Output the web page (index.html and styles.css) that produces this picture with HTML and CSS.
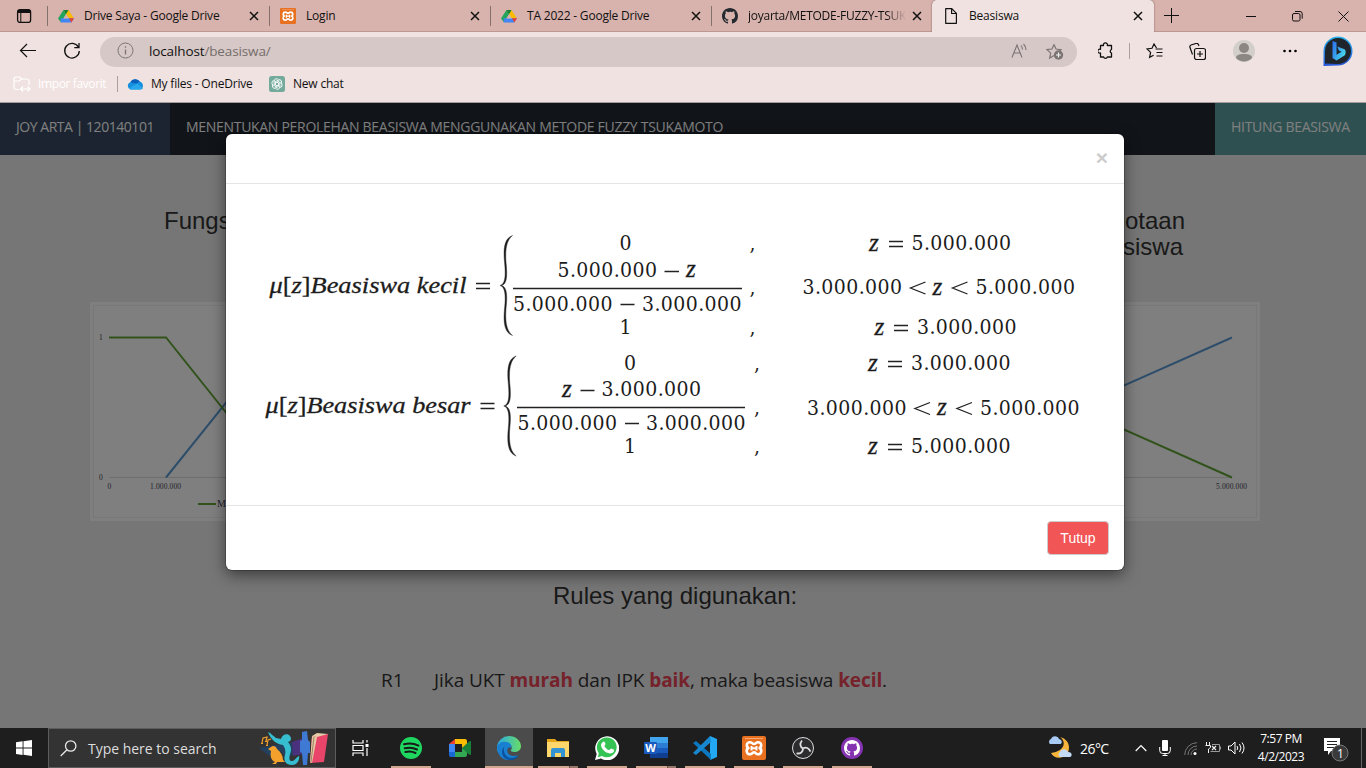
FILE: index.html
```html
<!DOCTYPE html>
<html lang="id">
<head>
<meta charset="utf-8">
<title>Beasiswa</title>
<link rel="stylesheet" href="styles.css">
</head>
<body>
<svg class="defs" width="0" height="0" aria-hidden="true">
  <symbol id="drive" viewBox="0 0 16 16">
    <path fill="#22a45d" d="M5.5 2h5L5 11.300 2.700 14 0 10.500z"/><path fill="#fbbc04" d="M5.500 2h5L16 10.500h-5z"/><path fill="#4285f4" d="M2.700 10.300H16L13.300 14.600H2.700z"/><path fill="#ea4335" d="M11 10.300h5l-2.700 4.300z"/><path fill="#188038" d="M5.500 2h5L8 6.200z"/><path fill="#d8b2ac" d="M8 6.200 10.600 10.400H5.400z"/>
  </symbol>
  <symbol id="xampp" viewBox="0 0 24 24">
    <rect width="24" height="24" rx="2" fill="#e8701f"/><path d="M3 2.500h18" stroke="#f3a878"/>
    <g fill="none" stroke="#fff" stroke-width="2.600" stroke-linejoin="round"><path d="M8 6.200c2 0 2.500 1.800 4 1.800s2-1.800 4-1.800c3.800 0 4 4.600 1.600 5.800 2.800 1.500 2 6.300-1.600 6.300-2 0-2.500-2-4-2s-2 2-4 2c-3.600 0-4.400-4.800-1.600-6.300C4 10.800 4.200 6.200 8 6.200z"/><path d="M9 12.200h6M9.500 10v4.500M14.500 10v4.500" stroke-width="2"/></g>
  </symbol>
  <symbol id="github" viewBox="0 0 16 16">
    <path d="M8 0C3.580 0 0 3.580 0 8c0 3.540 2.290 6.530 5.470 7.590.4.070.55-.17.55-.38v-1.490c-2.010.37-2.530-.49-2.690-.94-.09-.23-.48-.94-.82-1.130-.28-.15-.68-.52-.01-.53.63-.01 1.080.58 1.230.82.72 1.210 1.870.87 2.330.66.07-.52.28-.87.51-1.070-1.780-.2-3.640-.89-3.640-3.950 0-.87.31-1.590.82-2.150-.08-.2-.36-1.020.08-2.120 0 0 .67-.21 2.200.82A7.600 7.600 0 0 1 8 3.860c.68 0 1.360.09 2 .27 1.530-1.040 2.200-.82 2.200-.82.44 1.100.16 1.920.08 2.120.51.56.82 1.270.82 2.150 0 3.070-1.870 3.750-3.650 3.950.29.25.54.73.54 1.480v2.200c0 .21.15.46.55.38A8 8 0 0 0 16 8c0-4.420-3.580-8-8-8z"/>
  </symbol>
  <symbol id="x" viewBox="0 0 10 10"><path d="M1 1l8 8M9 1L1 9" stroke="#111" stroke-width="1.500"/></symbol>
</svg>

<header class="browser">
  <div class="tabs">
    <div class="tab-actions"><svg width="16" height="16" viewBox="0 0 16 16"><rect x="1.600" y="1.600" width="13" height="12.800" rx="2.500" fill="none" stroke="#111" stroke-width="1.300"/><path d="M1.500 5V3.500a2 2 0 0 1 2-2h9a2 2 0 0 1 2 2V5z" fill="#111"/><path d="M4.800 5v9" stroke="#111" stroke-width="1"/></svg></div>
    <div class="tab first"><svg width="16" height="16"><use href="#drive"/></svg><span>Drive Saya - Google Drive</span><svg class="close" width="10" height="10"><use href="#x"/></svg></div>
    <div class="tab"><svg width="16" height="16"><use href="#xampp"/></svg><span>Login</span><svg class="close" width="10" height="10"><use href="#x"/></svg></div>
    <div class="tab"><svg width="16" height="16"><use href="#drive"/></svg><span>TA 2022 - Google Drive</span><svg class="close" width="10" height="10"><use href="#x"/></svg></div>
    <div class="tab"><svg width="16" height="16" fill="#24292f"><use href="#github"/></svg><span class="faded">joyarta/METODE-FUZZY-TSUK</span><svg class="close" width="10" height="10"><use href="#x"/></svg></div>
    <div class="tab active"><svg width="16" height="16" viewBox="0 0 16 16"><path d="M2.700.7h6.100l4.600 4.600V15.300H2.700zM8.600.7v4.800h4.800" fill="none" stroke="#111" stroke-width="1.200" stroke-linejoin="round"/></svg><span>Beasiswa</span><svg class="close" width="10" height="10"><use href="#x"/></svg></div>
    <div class="new-tab"><svg width="15" height="15"><path d="M7.500 0v15M0 7.500h15" stroke="#111"/></svg></div>
    <div class="win"><svg width="10" height="10"><path d="M0 5.500h10" stroke="#111"/></svg></div>
    <div class="win"><svg width="11" height="11" viewBox="0 0 11 11" fill="none" stroke="#111"><rect x=".5" y="2.500" width="7.500" height="7.500" rx="1.500"/><path d="M3 .5h5a2.200 2.200 0 0 1 2.200 2.200v5"/></svg></div>
    <div class="win"><svg width="11" height="11"><path d="M.5.5l10 10M10.500.5l-10 10" stroke="#111"/></svg></div>
  </div>

  <div class="toolbar">
    <svg class="back" width="18" height="16" fill="none" stroke="#111" stroke-width="1.200"><path d="M17 7.500H1.500M8 1L1.500 7.500 8 14"/></svg>
    <svg class="reload" width="18" height="18" fill="none" stroke="#111" stroke-width="1.300"><path d="M15.300 5A7.300 7.300 0 1 0 16.300 9M16 1v4.700h-4.700"/></svg>
    <div class="omnibox">
      <svg width="17" height="17" fill="none" stroke="#7c7474"><circle cx="8.500" cy="8.500" r="7.500"/><path d="M8.500 7.500v5M8.500 4.300v1.500" stroke-width="1.300"/></svg>
      <span class="url">localhost<i>/beasiswa/</i></span>
      <svg class="aloud" width="18" height="16" fill="none" stroke="#7c7474" stroke-width="1.100"><path d="M1 14.500L6 2l5 12.500M2.800 10h6.400M10 2.500a6 6 0 0 1 1.500 4M12.500 1a8 8 0 0 1 2.500 6"/></svg>
      <svg class="fav" width="19" height="18" fill="none" stroke="#7c7474" stroke-width="1.200"><path d="M8 1.500l2 4.500 5 .6-3.600 3.400M8 1.500L6 6l-5 .6 3.700 3.500-1 5L8 12.600"/><circle cx="12.500" cy="12" r="4.700" fill="#7c7474" stroke="none"/><path d="M12.500 9.500v5M10 12h5" stroke="#eee"/></svg>
    </div>
    <div class="tools">
      <svg width="16" height="18" viewBox="0 0 16 18" fill="none" stroke="#111" stroke-width="1.300"><path d="M2.500 3.500h3a2 2 0 1 1 3.800 0h4.200v4a1.900 1.900 0 0 0 0 3.600v3.900H9.400a2 2 0 0 1-3.800 0H2.500V11a2 2 0 1 1 0-3.700z" stroke-linejoin="round"/></svg>
      <b></b>
      <svg width="17" height="16" fill="none" stroke="#111" stroke-width="1.200"><path d="M10.500 5L8 1 6 5.300l-5 .6 3.600 3.500-1 5 4-2.200M9.500 6h7M10.500 9.500h6M10.500 13h6"/></svg>
      <svg class="collect" width="17" height="17" fill="none" stroke="#111" stroke-width="1.200"><rect x="5.500" y="5.500" width="11" height="11" rx="2"/><path d="M11 8v6M8 11h6M3.500 11.500L.9 4.300A2 2 0 0 1 2 2l5-1.500a2 2 0 0 1 2.400 1L10 3"/></svg>
      <svg width="22" height="22"><circle cx="11" cy="11" r="11" fill="#d2cfcb"/><circle cx="11" cy="8" r="5" fill="#8c8783"/><path d="M3 18c0-3 3-4 8-4s8 1 8 4a11 11 0 0 1-16 0z" fill="#8c8783"/></svg>
      <svg width="16" height="4"><circle cx="2.500" cy="2" r="1.300"/><circle cx="8" cy="2" r="1.300"/><circle cx="13.500" cy="2" r="1.300"/></svg>
      <svg width="32" height="32"><defs><linearGradient id="bg" x2="0" y2="1"><stop stop-color="#27b4ee"/><stop offset="1" stop-color="#2856d8"/></linearGradient><linearGradient id="bb" x2="1" y2=".6"><stop stop-color="#2b6cf0"/><stop offset="1" stop-color="#45d5e8"/></linearGradient></defs><path d="M1.500 31V16A14.500 14.500 0 1 1 16 30.500z" fill="url(#bg)"/><path d="M3 28.500V16A13 13 0 1 1 16 29z" fill="#20242b"/><path d="M10.500 6l4 1.500v12.300l5-3-2.600-1.200-1.600-4 7.200 2.600c1.600 1 1.500 5.200 0 6.200l-8 5-4-2.400z" fill="url(#bb)"/></svg>
    </div>
  </div>

  <div class="favorites">
    <svg width="18" height="16" fill="none" stroke="#fff" stroke-width="1.200"><path d="M6 13.500H3a2 2 0 0 1-2-2V3a2 2 0 0 1 2-2h3.500l2 2H14a2 2 0 0 1 2 2v4M1 5h5.500l2-2M8 13h9M10 10.500L7.500 13l2.500 2.500M14.500 10.500L17 13l-2.500 2.500"/></svg>
    <span class="import">Impor favorit</span><b></b>
    <svg width="17" height="12"><path d="M4 11.500a3.800 3.800 0 0 1-.7-7.300A5.600 5.600 0 0 1 13 3.800a4 4 0 0 1 0 7.700z" fill="#1490df"/><path d="M3.300 4.200A5.600 5.600 0 0 1 13 3.800c-2 .2-2 1-3.500 2z" fill="#0a5fb8"/><path d="M2 10.500l8-5 6 5a4 4 0 0 1-2.500 1H4a4 4 0 0 1-2-1z" fill="#28a8ea"/></svg>
    <span class="onedrive">My files - OneDrive</span>
    <svg width="16" height="16" viewBox="0 0 16 16"><rect width="16" height="16" rx="2.500" fill="#74aa9c"/><g fill="none" stroke="#fff" stroke-width=".9"><path id="petal" d="M8 9.800L5.200 8.200V5A2.300 2.300 0 0 1 9.500 3.900"/><use href="#petal" transform="rotate(60 8 8)"/><use href="#petal" transform="rotate(120 8 8)"/><use href="#petal" transform="rotate(180 8 8)"/><use href="#petal" transform="rotate(240 8 8)"/><use href="#petal" transform="rotate(300 8 8)"/></g></svg>
    <span>New chat</span>
  </div>
</header>

<main class="page">
  <nav class="nav">
    <a class="brand">JOY ARTA | 120140101</a>
    <a class="title">MENENTUKAN PEROLEHAN BEASISWA MENGGUNAKAN METODE FUZZY TSUKAMOTO</a>
    <a class="cta">HITUNG BEASISWA</a>
  </nav>
  <section class="charts">
    <div class="col left">
      <h3>Fungsi</h3>
      <svg class="chart" width="390" height="219" viewBox="90 302 390 219">
        <rect x="90" y="302" width="390" height="219" fill="#fff"/><rect x="93.500" y="305.500" width="383" height="212" fill="none" stroke="#f1f1f1"/>
        <path d="M109 477.500H450" stroke="#dcdcdc"/>
        <path d="M166 477.500L278 338" stroke="#5b9bd5" stroke-width="2"/>
        <path d="M109 337.500H166L278 477.500" stroke="#62a536" stroke-width="1.900" fill="none"/>
        <path d="M198 504H216" stroke="#62a536" stroke-width="2"/>
        <g class="ticks"><text x="99" y="340">1</text><text x="99" y="480">0</text><text x="107.500" y="489">0</text><text x="150" y="489" textLength="31">1.000.000</text><text class="legend" x="217" y="507">M</text></g>
      </svg>
    </div>
    <div class="col right">
      <h3>Keanggotaan<br><span>Beasiswa</span></h3>
      <svg class="chart" width="390" height="219" viewBox="870 302 390 219">
        <rect x="870" y="302" width="390" height="219" fill="#fff"/><rect x="873.500" y="305.500" width="383" height="212" fill="none" stroke="#f1f1f1"/>
        <path d="M900 477.500H1232" stroke="#dcdcdc"/>
        <path d="M917 477.500L1232 337.500" stroke="#5b9bd5" stroke-width="2"/>
        <path d="M917 337.500L1232 477.500" stroke="#62a536" stroke-width="2"/>
        <g class="ticks"><text x="1216" y="489" textLength="31">5.000.000</text></g>
      </svg>
    </div>
  </section>
  <section class="rules">
    <h3>Rules yang digunakan:</h3>
    <p><span class="no">R1</span><span class="rule">Jika UKT <strong>murah</strong> dan IPK <strong>baik</strong>, maka beasiswa <strong>kecil</strong>.</span></p>
  </section>

  <div class="backdrop">
    <div class="modal">
      <div class="modal-head"><button class="dismiss">×</button></div>
      <svg class="formula" width="898" height="321" viewBox="226 184 898 321">
        <g class="it">
          <text x="269.500" y="292.500" textLength="197" lengthAdjust="spacingAndGlyphs">μ<tspan class="up">[</tspan>z<tspan class="up">]</tspan>Beasiswa kecil</text>
          <text x="265.500" y="412.500" textLength="205" lengthAdjust="spacingAndGlyphs">μ<tspan class="up">[</tspan>z<tspan class="up">]</tspan>Beasiswa besar</text>
        </g>
        <g class="ops">
          <path d="M476 283.500h14M476 288.500h14M480.500 403.500h14M480.500 408.500h14"/>
          <path d="M889 241.500h14M889 246.500h14M894 325.500h14M894 330.500h14M888 361.500h14M888 366.500h14M888 444.500h14M888 449.500h14"/>
          <path d="M664.500 271.500h14.500M620.500 304.500h14M580.500 390.500h14M625 423.500h14"/>
          <path d="M925.500 282L910.500 288l15 6M967.500 282L952.500 288l15 6M930 402.500L915 408.500l15 6M972 402.500L957 408.500l15 6"/>
          <path d="M513 288.500h229M517 407.500h228"/>
        </g>
        <g class="brace">
          <path id="brace" d="M512.500 235.500C505 238 503 247 504.500 262C506 277 505 284 500 285.500C505 287 506 294 504.500 309C503 324 505 333 512.500 335.500C507 331 505 323 506 309C507.500 295 507 287 501.500 285.500C507 284 507.500 276 506 262C505 248 507 240 512.500 235.500z"/>
          <use href="#brace" x="3.700" y="120.500"/>
        </g>
        <g transform="translate(0 -1)">
          <text x="619.500" y="251">0</text><text x="557.500" y="278" textLength="99.500">5.000.000</text><text class="z" x="686" y="278">z</text>
          <text x="513" y="311.500" textLength="99.500">5.000.000</text><text x="642" y="311.500" textLength="99.500">3.000.000</text><text x="619.500" y="335">1</text>
          <text x="624" y="371">0</text><text class="z" x="562" y="397.500">z</text><text x="601.500" y="397" textLength="99.500">3.000.000</text>
          <text x="517.500" y="431" textLength="99.500">5.000.000</text><text x="646" y="431" textLength="99.500">3.000.000</text><text x="624" y="454">1</text>
          <text x="749.500" y="251">,</text><text x="749.500" y="295">,</text><text x="749.500" y="335">,</text>
          <text x="754" y="371">,</text><text x="754" y="415">,</text><text x="754" y="454">,</text>
          <text class="z" x="869" y="251.500">z</text><text x="911.500" y="251" textLength="99.500">5.000.000</text>
          <text x="802.500" y="295" textLength="99.500">3.000.000</text><text class="z" x="932.500" y="295.500">z</text><text x="975.500" y="295" textLength="99.500">5.000.000</text>
          <text class="z" x="874.500" y="335.500">z</text><text x="917" y="335" textLength="99.500">3.000.000</text>
          <text class="z" x="868" y="371.500">z</text><text x="911" y="371" textLength="99.500">3.000.000</text>
          <text x="807" y="415.500" textLength="99.500">3.000.000</text><text class="z" x="937" y="415.500">z</text><text x="980" y="415.500" textLength="99.500">5.000.000</text>
          <text class="z" x="868" y="454.500">z</text><text x="911" y="454" textLength="99.500">5.000.000</text>
        </g>
      </svg>
      <div class="modal-foot"><button class="tutup">Tutup</button></div>
    </div>
  </div>
</main>

<footer class="taskbar">
  <div class="start"><svg width="16" height="16" fill="#fff"><path d="M0 2.200L6.600 1.300V7.600H0zM7.500 1.200L16 0v7.600H7.500zM0 8.500h6.600v6.400L0 14zM7.500 8.500H16V16l-8.500-1.200z"/></svg></div>
  <div class="search">
    <svg width="17" height="17" fill="none" stroke="#e8e8e8" stroke-width="1.300"><circle cx="10.700" cy="6" r="5.200"/><path d="M7 9.700L.7 16"/></svg>
    <span>Type here to search</span>
    <svg class="art" width="71" height="36" viewBox="0 0 71 36">
      <path d="M0 18l9 7 5 2 8-6 5 8 9-6 7-12-10 1z" fill="#24405f"/><path d="M33 12l11-4v16l-10 2z" fill="#49317d"/>
      <path d="M12 17c2-2 5-1 6 2 4 3 6 7 6 11l2 2h-8l-1 2h-4l3-2c-4-2-5-6-4-11l-3-2z" fill="#f3a12c"/>
      <path d="M3 13l1-5 4-1-1 4M8 15l1-5 3-1M2 13.500h2M6 11.500h2M7 15.500h2" stroke="#f3a12c" fill="none" stroke-width="1.200"/>
      <path d="M9 2c3 1 5 4 8 6l5 1c1-5 7-6 9-3s1 5-2 6c3 4 4 7 2 12-1 4-1 7 2 7s3-3 7-5c1 4-2 9-7 9-6 0-9-4-7-10 1-4 0-7-2-10-7-1-12-5-15-13z" fill="#36bdd0"/>
      <path d="M43 2l5-1 1 9 2 2v11h-2l-1 12h-4l-1-12-2-1V11l2-1z" fill="#3e79d4"/>
      <path d="M53 6l16-2-4 28-14 1z" fill="#e9446a"/><path d="M53 6l5 1-5 26-2-1z" fill="#e6c9a2"/><path d="M53 6l5-3 11 1-11 3z" fill="#e5cba7"/><path d="M55 7l-3 25" stroke="#876d58" stroke-width=".8"/>
    </svg>
  </div>
  <div class="view"><svg width="17" height="16" fill="none" stroke="#fff" stroke-width="1.200"><path d="M1 0v3h10V0M1 16v-3h10v3M1 5.500h10v5H1zM15 0v2.500M15 8v8"/><path d="M13.500 4h3v3h-3z" fill="#fff" stroke="none"/></svg></div>
  <div class="apps">
    <div class="app run"><svg width="24" height="24"><circle cx="12" cy="12" r="11" fill="#1ed760"/><path d="M5 8.300c5-1.500 10-1 14.500 1.300M5.700 12.300c4.500-1.200 8.500-.8 12.300 1.200M6.300 16c3.800-1 7-.6 10.200 1" fill="none" stroke="#191919" stroke-width="2" stroke-linecap="round"/></svg></div>
    <div class="app"><svg width="24" height="24"><path d="M1 8l6-5v5z" fill="#ea4335"/><path d="M7 3h10a2 2 0 0 1 2 2v4l-5 3V8H7z" fill="#fbbc04"/><path d="M1 8h6v8H1z" fill="#4285f4"/><path d="M1 16h6v5H3a2 2 0 0 1-2-2z" fill="#1967d2"/><path d="M7 16h7v-4l5 3v4a2 2 0 0 1-2 2H7z" fill="#34a853"/><path d="M14 12l7-6.500q2-1 2 .5v12q0 1.500-2 .5z" fill="#188038"/></svg></div>
    <div class="app run current"><svg width="24" height="24"><defs><linearGradient id="eg"><stop stop-color="#2aa9e2"/><stop offset="1" stop-color="#68dc68"/></linearGradient></defs><path d="M0 11A12 12 0 0 1 12 0c7 0 12 5 12 10 0 4-3 6-7 6-2 0-4-1-3-2 2-3 0-6-4-6-5 0-8 3-10 8z" fill="url(#eg)"/><path d="M0 11c1-4 5-6 9-5 4 0 6 3 5 6-1 0-2-1-3 0-3 5 3 10 10 7-2 3-6 5-10 5C5 24 0 18 0 11z" fill="#197fd0"/><path d="M7 11c-1 6 2 11 8 11q4 0 7-3-2 5-9 5C5 23 3 15 7 11z" fill="#0c529e"/></svg></div>
    <div class="app run multi"><svg width="24" height="24"><path d="M1 3h8l2 2h12v16H1z" fill="#e5a51a"/><path d="M1 6h22v15H1z" fill="#fdd76b"/><path d="M5 21v-7a2 2 0 0 1 2-2h10a2 2 0 0 1 2 2v7h-4v-4H9v4z" fill="#3493d3"/></svg></div>
    <div class="app run"><svg width="24" height="24"><path d="M0 24l1.700-6A12 12 0 1 1 6 22.500z" fill="#fff"/><path d="M2.800 21.200l1-4A9.900 9.900 0 1 1 7 20z" fill="#35c353"/><path d="M8 6c1-1 2 0 2.500 2 0 1-1 1-1 2 1 2 3 4 4.500 4 1 0 1-1 2-1.500 2 .5 3 1 3 2 0 2-2 3-4 3C10 17 6 12 6 9c0-1 1-2.500 2-3z" fill="#fff"/></svg></div>
    <div class="app run multi"><svg width="24" height="24"><path d="M6 1h18v6H6z" fill="#41a5ee"/><path d="M6 7h18v5H6z" fill="#2b7cd3"/><path d="M6 12h18v5H6z" fill="#185abd"/><path d="M6 17h18v5H6z" fill="#103f91"/><rect y="6" width="13" height="12" rx="1" fill="#185abd"/><text class="word" x="1.300" y="15.500">W</text></svg></div>
    <div class="app run"><svg width="24" height="24"><path d="M17 0l7 3v18l-7 3z" fill="#23a8f2"/><path d="M0 7l3-2 15 13v6z" fill="#0b77bf"/><path d="M0 17L17 0l1 6L3 19z" fill="#1788d0"/></svg></div>
    <div class="app run"><svg width="24" height="24"><use href="#xampp"/></svg></div>
    <div class="app run"><svg width="24" height="24" fill="none" stroke="#ddd"><circle cx="12" cy="12" r="10.500" fill="#2c2c2f"/><path id="fan" d="M12 12.500C9 11 8.500 7.500 11 4.500" stroke-width="1.800"/><use href="#fan" transform="rotate(120 12 12.500)"/><use href="#fan" transform="rotate(240 12 12.500)"/></svg></div>
    <div class="app run"><svg width="24" height="24"><circle cx="12" cy="12" r="11" fill="#8534b1"/><svg x="4" y="4" width="16" height="16" fill="#fff"><use href="#github"/></svg></svg></div>
  </div>
  <div class="tray">
    <svg class="weather" width="26" height="24"><path d="M13 1c6 4 6 14-9 16 2 4 7 6 12 4 8-3 9-17-3-20z" fill="#f6b43c"/><path d="M3 8a3 3 0 0 1 1-5c2-4 7-3 8 0 4 1 3 5 1 5z" fill="#a8caf5"/><path d="M13 21a3 3 0 0 1 0-5c2-4 7-3 8 0 5 0 4 5 2 5z" fill="#c4dbf8"/></svg>
    <span class="temp">26°C</span>
    <svg width="12" height="8" fill="none" stroke="#fff" stroke-width="1.200"><path d="M.7 7L6 1.500 11.300 7"/></svg>
    <svg class="mic" width="12" height="16" fill="none" stroke="#fff"><rect x="3" y="0" width="6" height="11" rx="1" fill="#fff" stroke="none"/><path d="M.7 7v3.500a3 3 0 0 0 3 3h4.600a3 3 0 0 0 3-3V7M6 13v2.500M3.500 15.500h5"/></svg>
    <svg class="wifi" width="13" height="13" fill="none" stroke="#777"><path d="M.7 13A12.300 12.300 0 0 1 13 .7M4 13a9 9 0 0 1 9-9M7 13a6 6 0 0 1 6-6"/><circle cx="11" cy="11.500" r="1.500" fill="#fff" stroke="none"/></svg>
    <svg class="bat" width="16" height="12" fill="none" stroke="#eee"><path d="M1.500 0v3M4.500 0v3M.5 3.500h5v2l-2 1.500v4"/><path d="M7 2.500h7.500v7H5.500M15.500 4.500v3" stroke="#999"/><path d="M7 4l4 4M11 4L7 8" stroke-width="1.200"/></svg>
    <svg class="vol" width="18" height="14" fill="none" stroke="#fff"><path d="M.5 5h2.500l4-4v12L3 9H.5zM9 5q1.500 2 0 4M11.500 3q3 4 0 8M14 1.500q4 5.500 0 11"/></svg>
    <div class="clock"><span>7:57 PM</span><span>4/2/2023</span></div>
    <svg class="notif" width="25" height="24"><path d="M0 0h16v13H7l-3 4v-4H0z" fill="#fff"/><path d="M3 3.500h10M3 6.500h10M3 9.500h7" stroke="#222"/><circle cx="16" cy="15" r="8" fill="#3a3a3a" stroke="#777"/><text class="cnt" x="13" y="19.500">1</text></svg>
  </div>
</footer>
</body>
</html>
```

FILE: styles.css
```css
* { box-sizing: border-box; }
body { margin: 0; width: 1366px; height: 768px; overflow: hidden; display: flex; flex-direction: column; font-family: "Open Sans", "Noto Sans", sans-serif; color: #111; }
svg { display: block; flex: none; }
.defs { position: absolute; }
span { white-space: nowrap; }

/* browser chrome */
.browser { height: 103px; background: #f0e2e0; border-bottom: 1px solid #a59c9b; flex: none; }
.tabs { display: flex; height: 32px; background: #d8b2ac; box-shadow: inset 0 -1px #bb9892; font-size: 12px; letter-spacing: -0.2px; }
.tab-actions { width: 47px; display: grid; place-items: center; }
.tab { width: 221px; display: flex; align-items: center; padding-left: 11px; gap: 10px; }
.tab.first { width: 222px; }
.tab::before { content: ""; width: 1px; height: 20px; background: #84706d; margin-left: -11px; }
.tab span { margin-top: -2px; }
.tab .close { margin-left: auto; margin-right: 10px; }
.tab .faded { margin-right: -14px; letter-spacing: -0.25px; mask-image: linear-gradient(90deg, #000 138px, transparent 158px); }
.tab.active { width: 222px; background: #f0e2e0; border-radius: 5px 5px 0 0; box-shadow: 0 0 2px #725b57; clip-path: inset(0 -3px 0 -3px); }
.tab.active::before { visibility: hidden; }
.tab.active .close { margin-right: 11px; }
.new-tab { width: 36px; display: grid; place-items: center; margin-right: auto; }
.new-tab svg { margin: 0 2px 2px 0; }
.win { width: 46px; display: grid; place-items: center; }

.toolbar { height: 38px; display: flex; align-items: center; }
.back { margin-left: 19px; }
.reload { margin: 0 19px 0 26px; }
.omnibox { width: 977px; height: 30px; border-radius: 15px; background: #d6c8c6; display: flex; align-items: center; padding: 0 12px 2px 17px; margin-top: 1px; }
.url { margin-left: 15px; margin-right: auto; font-size: 13.5px; letter-spacing: -0.13px; }
.url i { font-style: normal; color: #756d6c; }
.fav { margin: 2px 0 0 17px; }
.tools { display: grid; grid-template-columns: 44px 3px 46px 44px 46px 46px 50px; padding-left: 7px; align-items: center; justify-items: center; }
.tools .collect { margin-right: 3px; }
.tools b, .favorites b { width: 1px; height: 16px; background: #aaa09f; }

.favorites { height: 28px; display: flex; align-items: center; padding-left: 13px; font-size: 12px; letter-spacing: -0.2px; }
.favorites span { margin-top: -1px; }
.favorites .import { color: #fff; margin-left: 7px; width: 69px; letter-spacing: -0.38px; }
.favorites b { margin: 0 9px 0 10px; }
.favorites .onedrive { margin-right: 16px; margin-left: 7px; width: 102px; }
.favorites svg + span:last-child { margin-left: 8px; }

/* web page */
.page { height: 625px; flex: none; position: relative; overflow: hidden; background: #ececec; }
.nav { display: flex; height: 52px; background: #222832; color: #fff; font-size: 14px; letter-spacing: -0.3px; line-height: 20px; }
.nav a { padding: 14px 16px; white-space: nowrap; }
.nav .brand { width: 170px; background: #364860; letter-spacing: -0.46px; }
.nav .cta { width: 151px; background: #5da1a2; margin-left: auto; padding-right: 0; }
h3 { margin: 0; font: 24px/26px "Liberation Sans", Arial, sans-serif; color: #333; }
.charts { display: flex; justify-content: space-between; padding: 53px 106px 0 90px; }
.col { width: 390px; height: 366px; display: flex; flex-direction: column; justify-content: space-between; padding-bottom: 53px; }
.charts .col h3 { height: 52px; }
.left h3 { padding-left: 74px; }
.right h3 { text-align: right; padding-right: 75px; }
.right h3 span { margin-right: 2px; }
.ticks { font: 7.500px "Liberation Serif", serif; fill: #445; }
.ticks .legend { font-size: 10px; }
.rules h3 { padding-left: 553px; padding-top: 9px; }
.rules p { display: flex; margin: 56px 0 0 381px; font-size: 19px; line-height: 30px; letter-spacing: -0.08px; color: #333; }
.no { width: 53px; }
.rules strong { color: #ea4456; }

/* dialog */
.backdrop { position: absolute; inset: 0; background: rgba(0,0,0,.5); }
.modal { width: 898px; height: 436px; margin: 31px 0 0 226px; background: #fff; border-radius: 6px; box-shadow: 0 5px 15px rgba(0,0,0,.5), 0 0 0 1px rgba(0,0,0,.2); }
.modal-head { height: 50px; border-bottom: 1px solid #e5e5e5; padding: 13px 16px 12px; display: flex; justify-content: flex-end; }
.dismiss { border: 0; background: none; padding: 0; color: #ccc; font: bold 21px/21px "Liberation Sans", sans-serif; height: 21px; }
.modal-foot { height: 65px; border-top: 1px solid #e5e5e5; padding: 15px; display: flex; justify-content: flex-end; }
.tutup { width: 62px; height: 34px; background: #f15555; color: #fff; border: 1px solid #ccc; border-radius: 4px; padding: 0; font: 14px "Liberation Sans", Arial, sans-serif; }
.formula { font: 21px "DejaVu Serif Condensed", "DejaVu Serif", serif; font-stretch: condensed; fill: #1c1c1c; }
.it, .z { font: italic 25px "Liberation Serif", serif; stroke: #1c1c1c; stroke-width: .3px; }
.it { font-size: 24px; }
.up { font-style: normal; }
.ops { fill: none; stroke: #222; stroke-width: 1.300px; }
.brace { stroke: #1c1c1c; stroke-width: .4px; }

/* taskbar */
.taskbar { height: 40px; flex: none; background: #1e1e1e; display: flex; color: #fff; }
.start { width: 48px; display: grid; place-items: center; }
.search { width: 288px; border: 1px solid #5c5c5c; background: #333; display: flex; align-items: center; padding: 0 5px 0 11px; font-size: 14px; letter-spacing: -0.02px; color: #ddd; }
.search span { margin-left: 11px; margin-right: auto; }
.view { width: 48px; display: grid; place-items: center; }
.apps { display: flex; gap: 1px; margin-left: 3px; }
.app { width: 48px; display: grid; place-items: center; position: relative; }
.run::after { content: ""; position: absolute; bottom: 0; left: 4px; width: 40px; height: 2px; background: #d0a68e; }
.current { background: #4b4b4b; }
.current::after { left: 0; width: 48px; }
.multi::after { background: linear-gradient(90deg, #d0a68e 31px, #6b5246 31px 32px, #96776a 32px); }
.word { font: bold 11px "Open Sans", sans-serif; fill: #fff; }
.tray { margin-left: auto; display: flex; align-items: center; width: 319px; border-right: 1px solid #666; margin-right: 4px; padding-left: 4px; }
.temp { font-size: 14px; width: 30px; margin: 0 25px 0 7px; letter-spacing: -0.55px; }
.mic { margin: 0 13px 0 12px; }
.bat { margin: 0 7px 0 8px; }
.clock { width: 70px; display: flex; flex-direction: column; align-items: center; font-size: 12px; line-height: 18px; letter-spacing: -0.45px; }
.notif { margin-left: 8px; margin-top: 4px; }
.cnt { font: 12px "Open Sans", sans-serif; fill: #fff; }
```
